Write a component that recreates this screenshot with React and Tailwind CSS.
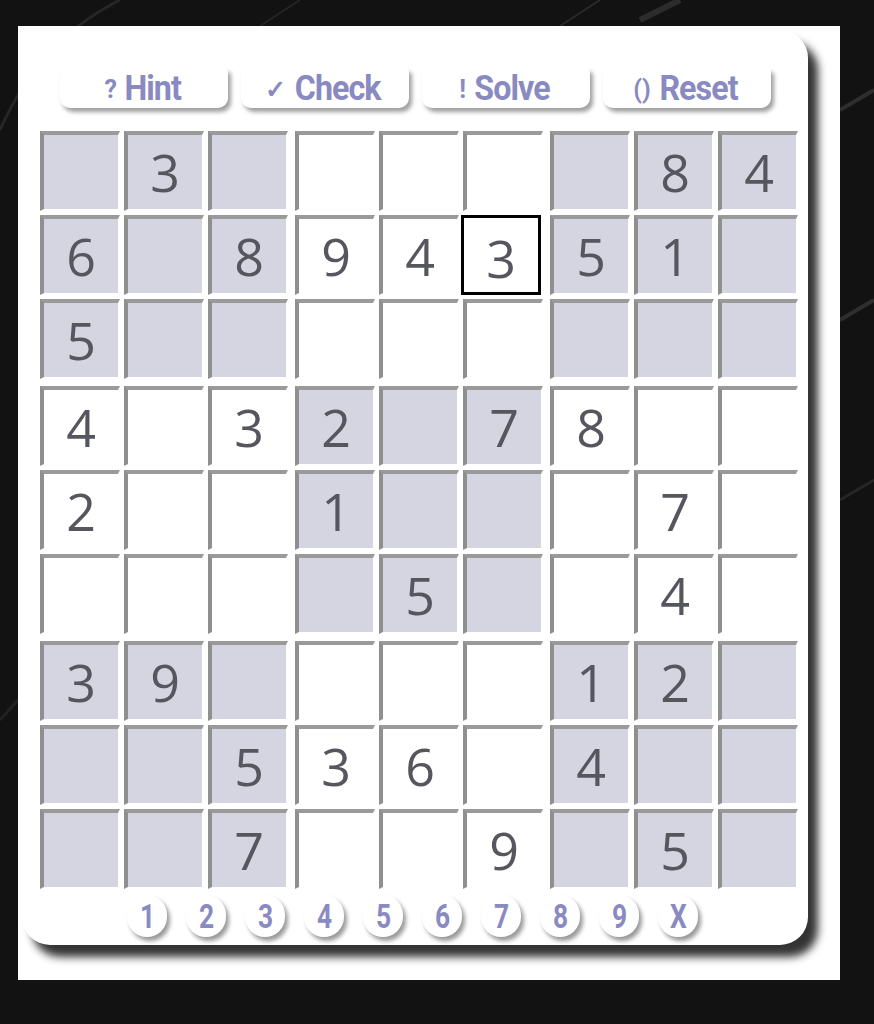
import React from "react";

const GRID = [
  [0, 3, 0, 0, 0, 0, 0, 8, 4],
  [6, 0, 8, 9, 4, 3, 5, 1, 0],
  [5, 0, 0, 0, 0, 0, 0, 0, 0],
  [4, 0, 3, 2, 0, 7, 8, 0, 0],
  [2, 0, 0, 1, 0, 0, 0, 7, 0],
  [0, 0, 0, 0, 5, 0, 0, 4, 0],
  [3, 9, 0, 0, 0, 0, 1, 2, 0],
  [0, 0, 5, 3, 6, 0, 4, 0, 0],
  [0, 0, 7, 0, 0, 9, 0, 5, 0],
];

const SHADED = [
  [true, false, true],
  [false, true, false],
  [true, false, true],
];

const digitFont = { fontFamily: '"Open Sans", "Noto Sans", sans-serif' };

function Cell({ value, shaded, selected }) {
  if (selected) {
    return (
      <div className="w-[80px] h-[80px] -ml-[2px] border-[3px] border-black bg-white flex items-center justify-center pt-[6px]">
        <span className="text-[52px] leading-none text-[#56565f]" style={digitFont}>
          {value || ""}
        </span>
      </div>
    );
  }
  return (
    <div
      className={`w-[80px] h-[80px] border-t-[4px] border-l-[4px] border-r-[2px] border-b-[2px] border-t-[#9a9a9a] border-l-[#8f8f8f] border-r-white border-b-white flex items-center justify-center ${
        shaded ? "bg-[#d5d5e2]" : "bg-white"
      }`}
    >
      <span className="text-[52px] leading-none text-[#56565f]" style={digitFont}>
        {value || ""}
      </span>
    </div>
  );
}

function Block({ br, bc }) {
  const cells = [];
  for (let r = 0; r < 3; r++) {
    for (let c = 0; c < 3; c++) {
      const row = br * 3 + r;
      const col = bc * 3 + c;
      cells.push(
        <Cell
          key={`${r}-${c}`}
          value={GRID[row][col]}
          shaded={SHADED[br][bc]}
          selected={row === 1 && col === 5}
        />
      );
    }
  }
  return <div className="grid grid-cols-3 gap-[4px]">{cells}</div>;
}

const btnFont = { fontFamily: '"Roboto", "Liberation Sans", sans-serif' };

function TopButton({ icon, label }) {
  return (
    <div className="w-[168px] h-[40px] bg-white rounded-b-[10px] rounded-t-[4px] shadow-[3px_4px_4px_rgba(0,0,0,0.38)] flex items-center justify-center gap-[5px] text-[#8a8ac2]" style={btnFont}>
      <span className="text-[25px] font-bold leading-none pt-[2px]">{icon}</span>
      <span className="text-[35px] font-bold leading-none tracking-[-1px] scale-x-[0.92]">{label}</span>
    </div>
  );
}

function PadButton({ label }) {
  return (
    <div className="w-[40px] h-[42px] rounded-full bg-white shadow-[3px_4px_4px_rgba(0,0,0,0.4)] flex items-center justify-center text-[#8a8ac2]" style={btnFont}>
      <span className="text-[33px] font-bold leading-none scale-x-[0.8]">{label}</span>
    </div>
  );
}

export default function App() {
  return (
    <div className="relative w-[874px] h-[1024px] bg-[#121212] overflow-hidden">
      <svg className="absolute inset-0" width="874" height="1024" viewBox="0 0 874 1024">
        <path d="M0 130 Q40 40 120 0" stroke="#262626" strokeWidth="3" fill="none" />
        <path d="M260 26 L300 0" stroke="#242424" strokeWidth="2" fill="none" />
        <path d="M560 26 L600 0" stroke="#2a2a2a" strokeWidth="2" fill="none" />
        <path d="M640 20 L680 0" stroke="#2c2c2c" strokeWidth="6" fill="none" />
        <path d="M840 110 L874 90" stroke="#2e2e2e" strokeWidth="4" fill="none" />
        <path d="M840 320 L874 300" stroke="#2e2e2e" strokeWidth="4" fill="none" />
        <path d="M840 500 L874 480" stroke="#262626" strokeWidth="3" fill="none" />
        <path d="M0 720 L18 700" stroke="#222" strokeWidth="3" fill="none" />
      </svg>
      <div className="relative pt-[26px] pl-[18px]">
        <div className="w-[822px] h-[954px] bg-white pt-[4px] pl-[4px]">
          <div className="w-[786px] h-[915px] rounded-[28px] bg-white shadow-[10px_12px_8px_rgba(0,0,0,0.8)] pl-[18px] pt-[38px] flex flex-col">
            <div className="ml-[20px] flex gap-[13px]">
              <TopButton icon="?" label="Hint" />
              <TopButton icon="✓" label="Check" />
              <TopButton icon="!" label="Solve" />
              <TopButton icon="()" label="Reset" />
            </div>
            <div className="mt-[23px] grid grid-cols-3 gap-[7px] w-[758px]">
              {[0, 1, 2].map((br) =>
                [0, 1, 2].map((bc) => <Block key={`${br}-${bc}`} br={br} bc={bc} />)
              )}
            </div>
            <div className="mt-[6px] ml-[87px] flex gap-[19px]">
              {["1", "2", "3", "4", "5", "6", "7", "8", "9", "X"].map((n) => (
                <PadButton key={n} label={n} />
              ))}
            </div>
          </div>
        </div>
      </div>
    </div>
  );
}
